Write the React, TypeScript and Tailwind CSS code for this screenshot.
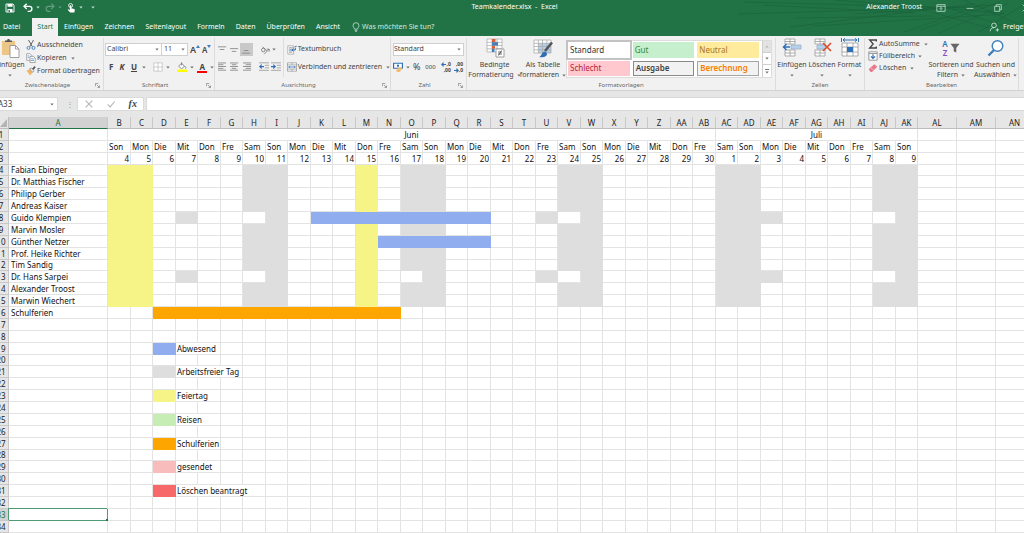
import type { ReactNode } from 'react'

const WEEKDAYS = ['Son', 'Mon', 'Die', 'Mit', 'Don', 'Fre', 'Sam']

const PEOPLE = [
  'Fabian Ebinger',
  'Dr. Matthias Fischer',
  'Philipp Gerber',
  'Andreas Kaiser',
  'Guido Klempien',
  'Marvin Mosler',
  'Günther Netzer',
  'Prof. Heike Richter',
  'Tim Sandig',
  'Dr. Hans Sarpei',
  'Alexander Troost',
  'Marwin Wiechert',
  'Schulferien',
]

const FILLS = {
  absent: 'bg-[#90adf0] border-[#90adf0]',
  free: 'bg-[#dedede] border-[#dedede]',
  holiday: 'bg-[#f6f387] border-[#f6f387]',
  travel: 'bg-[#c6edb4] border-[#c6edb4]',
  school: 'bg-[#ffa500] border-[#ffa500]',
  sent: 'bg-[#f9bcbc] border-[#f9bcbc]',
  remove: 'bg-[#f76868] border-[#f76868]',
  none: 'bg-white border-[#e3e3e3]',
}

type Fill = keyof typeof FILLS

// span: number of columns the label runs over
const LEGEND: Record<number, { fill: Fill; label: string; span: number }> = {
  19: { fill: 'absent', label: 'Abwesend', span: 2 },
  21: { fill: 'free', label: 'Arbeitsfreier Tag', span: 3 },
  23: { fill: 'holiday', label: 'Feiertag', span: 2 },
  25: { fill: 'travel', label: 'Reisen', span: 2 },
  27: { fill: 'school', label: 'Schulferien', span: 2 },
  29: { fill: 'sent', label: 'gesendet', span: 2 },
  31: { fill: 'remove', label: 'Löschen beantragt', span: 4 },
}

// day 0 is the 4th of June, column B
const DAYS = Array.from({ length: 36 }, (_, i) => i)
const ROWS = Array.from({ length: 34 }, (_, i) => i + 1)

function columnName(index: number): string {
  const letter = String.fromCharCode(65 + (index % 26))
  return index < 26 ? letter : 'A' + letter
}

function fillFor(row: number, day: number): Fill {
  if (row === 16) return day >= 2 && day <= 12 ? 'school' : 'none'
  if (row < 4 || row > 16) return 'none'
  if (row === 8 && day >= 9 && day <= 16) return 'absent'
  if (row === 10 && day >= 12 && day <= 16) return 'absent'
  if (row === 8 || row === 13) {
    if ([3, 19, 29].includes(day)) return 'free'
    if ([6, 20, 34].includes(day)) return 'none'
    if (row === 13 && day === 13) return 'none'
  }
  if ([0, 1, 11].includes(day)) return 'holiday'
  if (day % 7 === 6 || day % 7 === 0) return 'free'
  return 'none'
}

function Caret({ className = '' }: { className?: string }) {
  return (
    <svg viewBox="0 0 4 3" className={`h-[3px] w-1 shrink-0 ${className}`} fill="currentColor" fillOpacity=".75" aria-hidden="true">
      <path d="M.3.4h3.400L2 2.500z" />
    </svg>
  )
}

function Icon({ size = 'size-[10px]', box = 12, children }: { size?: string; box?: number; children: ReactNode }) {
  return (
    <svg viewBox={`0 0 ${box} ${box}`} className={`${size} shrink-0`} fill="none" aria-hidden="true">
      {children}
    </svg>
  )
}

function Group({ title, className, launcher, children }: { title: string; className: string; launcher?: boolean; children: ReactNode }) {
  return (
    <section aria-label={title} className={`flex shrink-0 flex-col border-r border-[#dcdcdc] ${className}`}>
      <div className="flex h-[42px] items-start">{children}</div>
      <div className="flex h-[10px] items-center text-[6px] leading-[10px] text-[#666]">
        <span className="flex-1 text-center">{title}</span>
        {launcher && (
          <button type="button" aria-label={`${title} Optionen`} className="mr-[3px] text-[#777]">
            <svg viewBox="0 0 6 6" className="size-[5px]" fill="none" stroke="currentColor" strokeWidth=".8">
              <path d="M.5 4V.5H4M2.3 2.3l3 3M5.4 3v2.4H3" />
            </svg>
          </button>
        )}
      </div>
    </section>
  )
}

function BigButton({ icon, lines, className }: { icon: ReactNode; lines: string[]; className: string }) {
  return (
    <button type="button" className={`flex shrink-0 flex-col items-center whitespace-nowrap leading-[10px] ${className}`}>
      <span className="mb-[2px] flex h-[20px] items-center">{icon}</span>
      <span>{lines[0]}</span>
      <span className="flex h-[10px] items-center gap-[3px]">
        {lines[1]}
        <Caret />
      </span>
    </button>
  )
}

function LinesIcon({ rows }: { rows: [number, number, number][] }) {
  return (
    <Icon size="h-[10px] w-[9px]" box={10}>
      {rows.map(([x, y, w]) => (
        <rect key={y} x={x} y={y} width={w} height="1" fill="#8a8a8a" />
      ))}
    </Icon>
  )
}

function TitleBar() {
  return (
    <div className="relative flex h-[15px] items-center">
      <div className="flex flex-1 items-center pl-[5px]">
        <button type="button" aria-label="Speichern">
          <Icon>
            <path d="M1.2 1.2h8.3l1.3 1.3v8.3H1.2z" stroke="#fff" strokeWidth="1.1" />
            <path d="M3 1.2h6v3.4H3zM3 7.2h6v3.6H3z" fill="#fff" />
            <path d="M4.2 8.3h1.6v2.4H4.2z" fill="#217346" />
          </Icon>
        </button>
        <button type="button" aria-label="Rückgängig" className="ml-[8px]">
          <Icon>
            <path d="M4.5.8 1.2 4l3.3 3.2M1.5 4h6.2a3 3 0 0 1 0 6H5.6" stroke="#fff" strokeWidth="1.6" />
          </Icon>
        </button>
        <Caret className="ml-[3px]" />
        <button type="button" aria-label="Wiederholen" className="ml-[5px] opacity-30">
          <Icon>
            <path d="M7.5.8 10.8 4 7.5 7.2M10.5 4H4.3a3 3 0 0 0 0 6h2.1" stroke="#fff" strokeWidth="1.4" />
          </Icon>
        </button>
        <Caret className="ml-[3px] opacity-40" />
        <button type="button" aria-label="Touch-/Mausmodus" className="ml-[4px]">
          <Icon>
            <circle cx="5.5" cy="3" r="2.4" stroke="#fff" strokeWidth="1" />
            <path d="M4.6 2.7h1.7v3.6l3.5.8c.7.2.9.6.8 1.2L10 11.5H5L2 8l.7-.6 1.9.9z" fill="#fff" />
          </Icon>
        </button>
        <Caret className="ml-[3px]" />
        <Caret className="ml-[8px]" />
      </div>
      <h1 className="whitespace-pre">Teamkalender.xlsx  -  Excel</h1>
      <div className="flex flex-1 items-center justify-end">
        <span className="mr-[14px]">Alexander Troost</span>
        <button type="button" aria-label="Menüband-Anzeigeoptionen" className="mr-[19px]">
          <Icon>
            <path d="M1 2h10v8H1zM1 4h10M6 9V5.5M4.3 7 6 5.3 7.7 7" stroke="#cfe3d7" strokeWidth=".9" />
          </Icon>
        </button>
        <button type="button" aria-label="Minimieren" className="mr-[18px]">
          <Icon>
            <path d="M2 6.5h8" stroke="#cfe3d7" strokeWidth=".9" />
          </Icon>
        </button>
        <button type="button" aria-label="Verkleinern" className="mr-[18px]">
          <Icon>
            <path d="M2 4h6v6H2zM4 4V2h6v6H8" stroke="#cfe3d7" strokeWidth=".9" />
          </Icon>
        </button>
        <button type="button" aria-label="Schließen" className="-mr-[7px]">
          <Icon>
            <path d="m2 2 8 8M10 2l-8 8" stroke="#cfe3d7" strokeWidth=".9" />
          </Icon>
        </button>
      </div>
    </div>
  )
}

function Tabs() {
  const after = ['Einfügen', 'Zeichnen', 'Seitenlayout', 'Formeln', 'Daten', 'Überprüfen', 'Ansicht']
  return (
    <nav className="relative flex h-[21px] items-end gap-px whitespace-nowrap">
      <button type="button" className="mr-[5px] h-[18px] pl-[3px] pr-[6px]">Datei</button>
      <button type="button" className="h-[18px] bg-[#f1f1f1] px-[5px] text-[#217346]">Start</button>
      {after.map((tab) => (
        <button key={tab} type="button" className="h-[18px] px-[5px]">
          {tab}
        </button>
      ))}
      <button type="button" className="ml-[5px] flex h-[18px] items-center gap-[1px] text-[#d6e8dd]">
        <Icon>
          <path d="M4.2 8.5C4 7 2.5 6.4 2.5 4.3a3.5 3.5 0 0 1 7 0C9.500 6.400 8 7 7.800 8.500zM4.400 10h3.200M5 11.500h2" stroke="#d6e8dd" strokeWidth=".9" />
        </Icon>
        Was möchten Sie tun?
      </button>
      <button type="button" className="-mr-[12px] ml-auto flex h-[18px] items-center gap-[4px]">
        <Icon>
          <circle cx="6" cy="4" r="2.800" stroke="#d6e8dd" />
          <path d="M1.500 11c0-2.500 1.800-4.200 4.500-4.200M8 9.500h4M10 7.500v4" stroke="#d6e8dd" />
        </Icon>
        Freigeben
      </button>
    </nav>
  )
}

function Header() {
  return (
    <header className="relative overflow-hidden bg-[#217346] text-white">
      <svg viewBox="0 0 300 36" className="absolute right-0 top-0 h-9 w-[300px]" fill="none" stroke="#1a6039" strokeWidth="1" aria-hidden="true">
        <path d="M20 2 250 8M14 14l200-6M70 18l140-2M66 27 250 4M90 26l190-12M40 5l150 8M110 0l170 13M130 14l140-9" opacity=".6" />
        <path d="M180 32 265 2M196 30l80-28M215 33l70-30M185 6l80 22M210 3l78 26M240 0l58 26M255 32l43-26" opacity=".5" />
      </svg>
      <TitleBar />
      <Tabs />
    </header>
  )
}

function ClipboardGroup() {
  return (
    <Group title="Zwischenablage" className="w-[104px]" launcher>
      <BigButton
        className="-ml-[5px] w-[30px]"
        lines={['Einfügen', '']}
        icon={
          <Icon size="size-[20px]" box={20}>
            <path d="M2 3h13v14H2z" fill="#edc584" />
            <path d="M5 4V2.500h2C7 .5 10 .5 10 2.500h2V4z" fill="#595959" />
            <path d="M10 7.500h5.500L19 11v8.500h-9z" fill="#fff" stroke="#8b8b8b" strokeWidth=".8" />
            <path d="M15.500 7.500V11H19" stroke="#8b8b8b" strokeWidth=".8" />
          </Icon>
        }
      />
      <div className="ml-[1px] flex flex-col gap-[3px] pt-[2px]">
        <button type="button" className="flex items-center gap-[1px] leading-[10px]">
          <Icon>
            <path d="m3 0 4.500 8M9 0 4.500 8" stroke="#666" strokeWidth="1.200" />
            <circle cx="3" cy="9.500" r="1.800" stroke="#3f7ebd" strokeWidth="1.100" />
            <circle cx="9" cy="9.500" r="1.800" stroke="#3f7ebd" strokeWidth="1.100" />
          </Icon>
          Ausschneiden
        </button>
        <button type="button" className="flex items-center gap-[1px] leading-[10px]">
          <Icon>
            <path d="M.8.800h4l2 2v6h-6z" fill="#fff" stroke="#888" strokeWidth=".8" />
            <path d="M4.800 4h4l2.200 2v5.500H4.800z" fill="#fff" stroke="#777" strokeWidth=".8" />
            <path d="M6 7h3.500M6 9h3.500M2 3.500h2M2 5.500h2" stroke="#4a8ac9" strokeWidth=".9" />
          </Icon>
          Kopieren
          <Caret className="ml-[3px]" />
        </button>
        <button type="button" className="flex items-center gap-[1px] leading-[10px]">
          <Icon>
            <path d="M.5 6 4 3.500 8 8l-3.500 3.500C4 9.500 2.500 7.500.5 6z" fill="#f0b662" />
            <path d="m4.500 3.500 2-1.200 3 3.200-1.500 2z" fill="#fff" stroke="#666" strokeWidth=".8" />
            <path d="m8 4 3-3.200" stroke="#555" strokeWidth="2" />
          </Icon>
          Format übertragen
        </button>
      </div>
    </Group>
  )
}

function FontGroup() {
  return (
    <Group title="Schriftart" className="w-[111px]" launcher>
      <div className="flex w-full flex-col pl-[1px] pt-[5px]">
        <div className="flex h-[13px] items-center">
          <label className="relative flex h-[13px] w-[57px] items-center border border-[#d0d0d0] bg-white">
            <select aria-label="Schriftart" className="w-full appearance-none pl-[1px] outline-none">
              <option>Calibri</option>
            </select>
            <Caret className="absolute right-[2px]" />
          </label>
          <label className="relative flex h-[13px] w-[26px] items-center border border-l-0 border-[#d0d0d0] bg-white">
            <select aria-label="Schriftgrad" className="w-full appearance-none pl-[2px] outline-none">
              <option>11</option>
            </select>
            <Caret className="absolute right-[2px]" />
          </label>
          <button type="button" aria-label="Schriftgrad vergrößern" className="ml-[2px] flex items-start text-[9px] font-semibold leading-[11px]">
            A<svg viewBox="0 0 4 3" className="mt-[1px] h-[3px] w-1"><path d="M0 3h4L2 0z" fill="#3f7ebd" /></svg>
          </button>
          <button type="button" aria-label="Schriftgrad verkleinern" className="ml-[2px] flex items-start text-[8px] font-semibold leading-[11px]">
            A<svg viewBox="0 0 4 3" className="mt-[1px] h-[3px] w-1"><path d="M0 0h4L2 3z" fill="#3f7ebd" /></svg>
          </button>
        </div>
        <div className="mt-[5px] flex h-[12px] items-center text-[8px] font-bold">
          <button type="button" className="ml-[4px] w-[11px] text-left">F</button>
          <button type="button" className="w-[12px] text-left italic">K</button>
          <button type="button" className="w-[12px] text-left underline">U</button>
          <Caret className="mr-[7px]" />
          <button type="button" aria-label="Rahmen">
            <Icon>
              <path d="M1 1h10v10H1zM6 1v10M1 6h10" fill="#fff" stroke="#b5b5b5" strokeWidth=".8" />
            </Icon>
          </button>
          <Caret className="ml-[3px] mr-[7px]" />
          <button type="button" aria-label="Füllfarbe">
            <Icon>
              <path d="m2 5 3.500-3.500L9 5 5.500 8.200z" fill="#fff" stroke="#777" />
              <path d="M5.500 4V.5M9.500 5c1 1 1.500 2 .8 3" stroke="#3f7ebd" />
              <path d="M0 9h12v3H0z" fill="#ff0" />
            </Icon>
          </button>
          <Caret className="ml-[3px] mr-[3px]" />
          <button type="button" aria-label="Schriftfarbe" className="h-[11px] w-[10px] border-b-2 border-[#f00] leading-[9px]">
            A
          </button>
          <Caret className="ml-[3px]" />
        </div>
      </div>
    </Group>
  )
}

function AlignGroup() {
  return (
    <Group title="Ausrichtung" className="w-[176px]" launcher>
      <div className="flex w-[69px] flex-col border-r border-[#dcdcdc] pb-[4px] pt-[5px]">
        <div className="flex h-[13px] items-center">
          <button type="button" aria-label="Oben ausrichten" className="ml-[3px] w-[12px]">
            <LinesIcon rows={[[0, 1, 9], [2, 4, 5]]} />
          </button>
          <button type="button" aria-label="Zentriert ausrichten" className="w-[10px]">
            <LinesIcon rows={[[0, 3, 9], [2, 6, 5]]} />
          </button>
          <button type="button" aria-label="Unten ausrichten" className="flex size-[13px] items-center justify-center bg-[#c9c9c9]">
            <LinesIcon rows={[[2, 5, 5], [0, 8, 9]]} />
          </button>
          <button type="button" aria-label="Ausrichtung" className="ml-[7px]">
            <Icon>
              <circle cx="4" cy="6" r="2.200" stroke="#777" />
              <path d="m3 2 5 5M5 11l6-6M11 8V5H8" stroke="#777" />
            </Icon>
          </button>
          <Caret className="ml-[2px]" />
        </div>
        <div className="mt-[5px] flex h-[12px] items-center">
          <button type="button" aria-label="Linksbündig" className="ml-[3px] w-[12px]">
            <LinesIcon rows={[[0, 0, 9], [0, 2, 6], [0, 4, 9], [0, 6, 6], [0, 8, 9]]} />
          </button>
          <button type="button" aria-label="Zentriert" className="w-[13px]">
            <LinesIcon rows={[[0, 0, 9], [2, 2, 5], [0, 4, 9], [2, 6, 5], [0, 8, 9]]} />
          </button>
          <button type="button" aria-label="Rechtsbündig" className="w-[16px]">
            <LinesIcon rows={[[0, 0, 9], [3, 2, 6], [0, 4, 9], [3, 6, 6], [0, 8, 9]]} />
          </button>
          <button type="button" aria-label="Einzug verkleinern" className="w-[12px]">
            <Icon>
              <path d="M0 1h12M7 4h5M7 7h5M0 10h12" stroke="#999" />
              <path d="M6 5.500H1M3.200 3.200.9 5.500l2.300 2.300" stroke="#2f6fb5" strokeWidth="1.300" />
            </Icon>
          </button>
          <button type="button" aria-label="Einzug vergrößern">
            <Icon>
              <path d="M0 1h12M7 4h5M7 7h5M0 10h12" stroke="#999" />
              <path d="M0 5.500h5M2.800 3.200l2.300 2.300-2.300 2.300" stroke="#2f6fb5" strokeWidth="1.300" />
            </Icon>
          </button>
        </div>
      </div>
      <div className="flex flex-col pl-[3px] pt-[5px]">
        <button type="button" className="flex h-[13px] items-center gap-[1px]">
          <Icon>
            <path d="M1 1h7v10H1z" fill="#fff" stroke="#999" strokeWidth=".8" />
            <path d="M2.500 3.500h5M2.500 8.500h4" stroke="#777" />
            <path d="M2.500 6H10V3.500M7.500 4.500 6 6l1.500 1.500M9 2.500l2.500-1" stroke="#2f6fb5" strokeWidth="1.200" />
          </Icon>
          Textumbruch
        </button>
        <button type="button" className="mt-[5px] flex h-[12px] items-center gap-[1px] whitespace-nowrap">
          <Icon>
            <path d="M.5 1h11v10H.5zM.5 3.500h11M.5 8.500h11M6 1v2.500M6 8.500V11" fill="#fff" stroke="#888" strokeWidth=".8" />
            <path d="M2 6h8M3.500 4.500 2 6l1.500 1.500M8.500 4.500 10 6 8.500 7.500" stroke="#2f6fb5" />
          </Icon>
          Verbinden und zentrieren
          <Caret className="ml-[3px]" />
        </button>
      </div>
    </Group>
  )
}

function NumberGroup() {
  return (
    <Group title="Zahl" className="w-[76px]" launcher>
      <div className="flex w-full flex-col px-[2px] pt-[5px]">
        <label className="relative flex h-[13px] items-center border border-[#d0d0d0] bg-white">
          <select aria-label="Zahlenformat" className="w-full appearance-none outline-none">
            <option>Standard</option>
          </select>
          <Caret className="absolute right-[2px]" />
        </label>
        <div className="mt-[5px] flex h-[12px] items-center">
          <button type="button" aria-label="Buchhaltungszahlenformat">
            <Icon>
              <path d="M.7 1.500h10.600v6H.7z" fill="#fff" stroke="#2f6fb5" strokeWidth="1.400" />
              <circle cx="6" cy="4.500" r="1.400" fill="#2f6fb5" />
              <ellipse cx="8.500" cy="8" rx="2.800" ry="1.400" fill="#f0b662" />
              <ellipse cx="6.500" cy="10.500" rx="2.800" ry="1.400" fill="#f0b662" />
            </Icon>
          </button>
          <Caret className="ml-[3px]" />
          <button type="button" className="ml-[3px] text-[9px]">%</button>
          <button type="button" className="ml-[4px] w-[12px] text-[6px]">000</button>
          <button type="button" aria-label="Dezimalstelle hinzufügen" className="ml-[5px] flex flex-col items-end text-[5px] font-bold leading-[6px]">
            <span className="flex items-center">
              <svg viewBox="0 0 5 5" className="size-[5px]" fill="none" stroke="#2f6fb5" strokeWidth="1.200"><path d="M5 2.500H1M2.600.7.8 2.500l1.800 1.800" /></svg>
              ,0
            </span>
            <span>,00</span>
          </button>
          <button type="button" aria-label="Dezimalstelle löschen" className="ml-[3px] flex flex-col items-end text-[5px] font-bold leading-[6px]">
            <span>,00</span>
            <span className="flex items-center">
              <svg viewBox="0 0 5 5" className="size-[5px]" fill="none" stroke="#2f6fb5" strokeWidth="1.200"><path d="M0 2.500h4M2.400.7l1.800 1.800-1.800 1.800" /></svg>
              ,0
            </span>
          </button>
        </div>
      </div>
    </Group>
  )
}

function StylesGroup() {
  const styles = [
    { name: 'Standard', look: 'bg-white text-[#333] outline-2 outline-[#c3c3c3]' },
    { name: 'Gut', look: 'bg-[#c6efce] text-[#2f8a35]' },
    { name: 'Neutral', look: 'bg-[#ffeb9c] text-[#a97523]' },
    { name: 'Schlecht', look: 'bg-[#ffc7ce] text-[#b3263a]' },
    { name: 'Ausgabe', look: 'border border-[#8a8a8a] bg-[#f2f2f2] font-semibold text-[#3f3f3f]' },
    { name: 'Berechnung', look: 'border border-[#a5a5a5] bg-[#f2f2f2] font-semibold text-[#fa7d00]' },
  ]
  return (
    <Group title="Formatvorlagen" className="min-w-[309px] flex-1">
      <BigButton
        className="ml-[2px] w-[51px]"
        lines={['Bedingte', 'Formatierung']}
        icon={
          <Icon size="size-[20px]" box={20}>
            <path d="M2 1h15v13H2zM2 4.300h15M2 7.500h15M2 10.800h15M7 1v13M12 1v13" fill="#fff" stroke="#a5a5a5" strokeWidth=".7" />
            <path d="M7 1h3.500v3.300H7zM7 7.500h3v3.300H7z" fill="#d9603b" />
            <path d="M7 4.300h6v3.200H7zM7 10.800h2.500V14H7z" fill="#3f7ebd" />
            <path d="M11 11h8v8h-8z" fill="#fff" stroke="#8b8b8b" strokeWidth=".8" />
            <path d="M13 14h4M13 16h4M16.500 12.500l-3 5" stroke="#444" strokeWidth=".8" />
          </Icon>
        }
      />
      <BigButton
        className="w-[46px]"
        lines={['Als Tabelle', 'formatieren']}
        icon={
          <Icon size="size-[20px]" box={20}>
            <path d="M1 2h17v13H1z" fill="#fff" />
            <path d="M5.300 5.300H18V15H5.300z" fill="#b7d0ea" />
            <path d="M1 2h17v13H1zM1 5.300h17M1 8.500h17M1 11.800h17M5.300 2v13M9.500 2v13M13.800 2v13" stroke="#a5a5a5" strokeWidth=".7" />
            <path d="m12 13 7-8.500" stroke="#555" strokeWidth="2.500" />
            <path d="M6 19c2.500-.5 2.500-5 6-5.500l2 2c.5 3-4 4.500-8 3.500z" fill="#2f6fb5" />
          </Icon>
        }
      />
      <div className="mt-[2px] flex h-[38px] flex-1 border border-[#dcdcdc] bg-white text-[8px]">
        <div className="grid flex-1 grid-cols-3 grid-rows-2 gap-[3px] p-[1px] pr-[3px]">
          {styles.map((style) => (
            <button key={style.name} type="button" className={`px-[2px] text-left leading-none ${style.look}`}>
              {style.name}
            </button>
          ))}
        </div>
        <div className="grid w-[9px] grid-rows-3 divide-y divide-[#cfcfcf] border-l border-[#cfcfcf]">
          <button type="button" aria-label="Vorherige Zeile" className="flex items-center justify-center bg-[#e3e3e3] text-[#aaa]"><Caret className="rotate-180" /></button>
          <button type="button" aria-label="Nächste Zeile" className="flex items-center justify-center"><Caret /></button>
          <button type="button" aria-label="Weitere" className="flex flex-col items-center justify-center gap-px"><i className="h-px w-1 bg-[#777]" /><Caret /></button>
        </div>
      </div>
      <span className="w-[3px]" />
    </Group>
  )
}

function CellsGroup() {
  const grid = 'M3 1h10v5H3zM3 12h10v6H3zM8 1v5M8 12v6M3 15h10M3 3.500h10'
  return (
    <Group title="Zellen" className="w-[89px]">
      <BigButton
        className="ml-[1px] w-[30px]"
        lines={['Einfügen', '']}
        icon={
          <Icon size="size-[20px]" box={20}>
            <path d={grid} fill="#fff" stroke="#999" strokeWidth=".8" />
            <path d="M9 7h10v4H9z" fill="#b7d0ea" stroke="#8fa9c6" strokeWidth=".7" />
            <path d="M8 9H1.500M4.500 6 1.500 9l3 3" stroke="#2f6fb5" strokeWidth="1.500" />
          </Icon>
        }
      />
      <BigButton
        className="w-[30px]"
        lines={['Löschen', '']}
        icon={
          <Icon size="size-[20px]" box={20}>
            <path d={grid} fill="#fff" stroke="#999" strokeWidth=".8" />
            <path d="M5 7h9v4H5z" fill="#b7d0ea" stroke="#8fa9c6" strokeWidth=".7" />
            <path d="m11 5 8 8M19 5l-8 8" stroke="#d9512c" strokeWidth="1.700" />
          </Icon>
        }
      />
      <BigButton
        className="w-[25px]"
        lines={['Format', '']}
        icon={
          <Icon size="size-[20px]" box={20}>
            <path d="M2 5h16v13H2zM2 9h16M2 14h16M7 5v13M13 5v13" fill="#fff" stroke="#999" strokeWidth=".8" />
            <path d="M7 9h6v5H7z" fill="#2f6fb5" />
            <path d="M3 2h14M5 .3 3 2l2 1.700M15 .3 17 2l-2 1.700M1.500 0v4M18.500 0v4" stroke="#2f6fb5" />
          </Icon>
        }
      />
    </Group>
  )
}

function EditGroup() {
  return (
    <Group title="Bearbeiten" className="mr-[5px] w-[154px]">
      <div className="ml-[3px] flex w-[60px] flex-col gap-[2px] pt-[1px]">
        <button type="button" className="flex items-center gap-[1px] leading-[10px]">
          <Icon>
            <path d="M10 3V1.200H2L6.200 6 2 10.800h8V9" stroke="#444" strokeWidth="1.600" />
          </Icon>
          AutoSumme
          <Caret className="ml-[3px]" />
        </button>
        <button type="button" className="flex items-center gap-[1px] leading-[10px]">
          <Icon>
            <path d="M1 1h10v10H1zM1 3h10" fill="#fff" stroke="#888" />
            <path d="M6 4v5M3.500 6.500 6 9l2.500-2.500" stroke="#2f6fb5" strokeWidth="1.400" />
          </Icon>
          Füllbereich
          <Caret className="ml-[2px]" />
        </button>
        <button type="button" className="flex items-center gap-[1px] leading-[10px]">
          <Icon>
            <path d="m.8 7.500 6.700-6 3.700 3-6.400 6.200H3z" fill="#e8788a" />
            <path d="m3 5.500 4 3.300" stroke="#f7c2cb" />
          </Icon>
          Löschen
          <Caret className="ml-[3px]" />
        </button>
      </div>
      <BigButton
        className="w-[46px]"
        lines={['Sortieren und', 'Filtern']}
        icon={
          <span className="flex items-center gap-[2px]">
            <span className="flex flex-col text-[8px] font-semibold leading-[9px]">
              <span className="text-[#2f6fb5]">A</span>
              <span className="text-[#8c4fb5]">Z</span>
            </span>
            <Icon>
              <path d="M.5 1h11L7.500 6v5.500l-3-1.500V6z" fill="#666" />
            </Icon>
          </span>
        }
      />
      <BigButton
        className="w-[43px]"
        lines={['Suchen und', 'Auswählen']}
        icon={
          <Icon size="size-[18px]" box={18}>
            <circle cx="10.500" cy="7" r="5.300" fill="#fff" stroke="#3f7ebd" strokeWidth="1.400" />
            <path d="M7 11 1.500 16.500" stroke="#3f7ebd" strokeWidth="2.400" />
          </Icon>
        }
      />
    </Group>
  )
}

function FormulaBar() {
  return (
    <div className="flex h-[27px] items-center border-t border-[#d2d2d2] bg-[#e6e6e6] text-[8px]">
      <label className="relative flex h-[14px] w-[58px] items-center overflow-hidden border border-l-0 border-[#dadada] bg-white">
        <input aria-label="Namenfeld" defaultValue="A33" className="-ml-[2px] w-full outline-none" />
        <Caret className="absolute right-[3px]" />
      </label>
      <span className="mx-[8px] w-[3px] text-center leading-none text-[#999]">⋮</span>
      <div className="flex h-[14px] w-[67px] items-center justify-around border border-[#dadada] bg-white">
        <button type="button" aria-label="Abbrechen">
          <Icon><path d="m2 2 8 8M10 2l-8 8" stroke="#b5b5b5" strokeWidth="1.300" /></Icon>
        </button>
        <button type="button" aria-label="Eingeben">
          <Icon><path d="m2 6.500 3 3L10.500 3" stroke="#b5b5b5" strokeWidth="1.300" /></Icon>
        </button>
        <button type="button" aria-label="Funktion einfügen" className="font-['Liberation_Serif',serif] text-[10px] font-bold italic leading-none">
          fx
        </button>
      </div>
      <input aria-label="Bearbeitungsleiste" className="ml-[2px] h-[14px] min-w-0 flex-1 border border-r-0 border-[#dadada] bg-white outline-none" />
    </div>
  )
}

function DayCells({ row }: { row: number }) {
  if (row === 1) {
    return (
      <>
        <td colSpan={27} className="border-[#e3e3e3] text-center">Juni</td>
        <td colSpan={9} className="border-[#e3e3e3] text-center">Juli</td>
      </>
    )
  }
  const legend = LEGEND[row]
  return DAYS.map((day) => {
    if (legend && day === 2) return <td key={day} className={FILLS[legend.fill]} />
    if (legend && day === 3) {
      return (
        <td key={day} colSpan={legend.span} className="border-[#e3e3e3] pl-[1px]">
          {legend.label}
        </td>
      )
    }
    if (legend && day > 3 && day < 3 + legend.span) return null
    if (row === 2) return <td key={day} className="border-[#e3e3e3] pl-[1px]">{WEEKDAYS[day % 7]}</td>
    if (row === 3) {
      return (
        <td key={day} className="border-[#e3e3e3] pr-[1px] text-right">
          {day < 27 ? day + 4 : day - 26}
        </td>
      )
    }
    return <td key={day} className={FILLS[fillFor(row, day)]} />
  })
}

function Sheet() {
  return (
    <div className="overflow-hidden">
      <table className="-ml-[6px] w-[calc(100%+16px)] table-fixed border-separate border-spacing-0 whitespace-nowrap text-[8px] leading-[10px] text-[#111] [&_td]:border-b [&_td]:border-r [&_td]:py-0">
        <colgroup>
          <col className="w-[15px]" />
          <col className="w-[99px]" />
          {DAYS.map((day) => (
            <col key={day} className={day % 2 ? 'w-[22px]' : 'w-[23px]'} />
          ))}
          <col className="w-[39px]" />
          <col className="w-[39px]" />
          <col className="w-[38px]" />
        </colgroup>
        <thead>
          <tr className="h-[12px] bg-[#e6e6e6] text-[#222]">
            <th aria-label="Alles auswählen" className="border-b border-r border-[#bdbdbd] p-0">
              <svg viewBox="0 0 7 8" className="ml-auto mr-[1px] h-2 w-[7px]" fill="#b4b4b4">
                <path d="M7 0v8H0z" />
              </svg>
            </th>
            {Array.from({ length: 40 }, (_, i) => (
              <th
                key={i}
                scope="col"
                className={`border-b border-r border-r-[#c8c8c8] p-0 font-normal ${i === 0 ? 'border-b-[#217346] bg-[#d2d2d2] text-[#217346]' : 'border-b-[#bdbdbd]'}`}
              >
                {columnName(i)}
              </th>
            ))}
          </tr>
        </thead>
        <tbody>
          {ROWS.map((row) => (
            <tr key={row} className={row % 8 === 4 ? 'h-[11px]' : 'h-[12px]'}>
              <th
                scope="row"
                className={`border-b border-r border-[#c8c8c8] p-0 text-center font-normal ${row === 33 ? 'bg-[#d2d2d2] text-[#217346]' : 'bg-[#e6e6e6] text-[#222]'}`}
              >
                {row}
              </th>
              {row === 33 ? (
                <td className="relative border-[#4f9a72] shadow-[-1px_-1px_0_0_#4f9a72]">
                  <i className="absolute -bottom-[1px] -right-[1px] size-[2px] bg-[#217346]" />
                </td>
              ) : (
                <td className="border-[#e3e3e3] pl-[2px]">{PEOPLE[row - 4]}</td>
              )}
              <DayCells row={row} />
              <td className="border-[#e3e3e3]" />
              <td className="border-[#e3e3e3]" />
              <td className="border-[#e3e3e3]" />
            </tr>
          ))}
        </tbody>
      </table>
    </div>
  )
}

export default function App() {
  return (
    <div className="min-h-screen overflow-hidden bg-white font-['Noto_Sans','Open_Sans',sans-serif] text-[7px] text-[#444]">
      <Header />
      <div className="flex overflow-hidden bg-[#f1f1f1] pt-[2px]">
        <ClipboardGroup />
        <FontGroup />
        <AlignGroup />
        <NumberGroup />
        <StylesGroup />
        <CellsGroup />
        <EditGroup />
      </div>
      <FormulaBar />
      <Sheet />
    </div>
  )
}
